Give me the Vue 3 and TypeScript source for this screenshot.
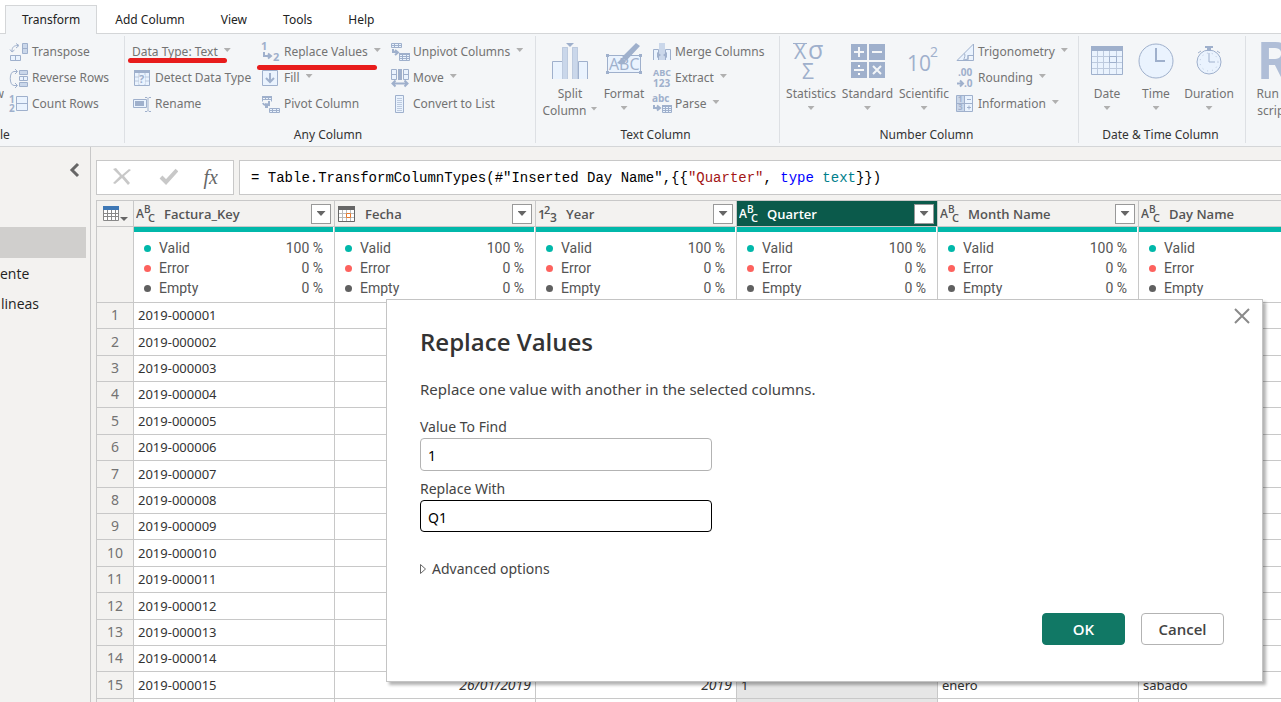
<script setup lang="ts">
import { ref } from 'vue'

interface SmallCommand {
  label: string
  icon?: string
  menu?: boolean
  mark?: boolean
}

interface LargeCommand {
  lines: string[]
  icon: string
  inlineMenu?: boolean
}

interface Block {
  large?: LargeCommand[]
  small?: SmallCommand[]
}

interface Group {
  key: string
  title: string
  blocks: Block[]
}

interface Column {
  name: string
  type: 'text' | 'date' | 'number'
  selected?: boolean
}

const icons: Record<string, string> = {
  transpose:
    '<path class="m" d="M13.5 1.5h5v10h-5zM13.5 6.5h5"/><path class="l" d="M1.500 13.500h10v5h-10zM6.500 13.500v5"/><path class="n" d="M3 9C3 5 5 3.500 9 3.500M1 7.500l2 2.500 2.500-2M7 1.500l3 2-3 2.500"/>',
  reverse:
    '<path class="l" d="M10.500 2.500h8v4h-8zM10.500 8.500h8v4h-8zM10.500 14.500h8v4h-8zM14.500 8.500v4"/><path class="k" d="M11 3h7v3h-7zM11 15h7v3h-7z"/><path class="n" d="M8 3.500H5C0 3.500 0 17.500 5 17.500h3M6 1l2.500 2.500L6 6M6 15l2.500 2.500L6 20"/>',
  count:
    '<text x="0" y="9" font-size="10">1</text><text x="0" y="18" font-size="10">2</text><path class="l" d="M7.500 2.500h11v14h-11zM7.500 9.500h11"/>',
  detect:
    '<path class="l" d="M2.500 2.500h15v15h-15z"/><path class="d" d="M2 2h16v3H2z"/><path class="g" d="M3 9h14M3 13h14M7 5v12M13 5v12"/><path class="p" d="M7 7h6v9H7z"/><text x="7" y="15" font-size="11">?</text>',
  rename:
    '<path class="l" d="M1.500 5.500h13v8h-13z"/><path class="d" d="M3 7h9v5H3z"/><path class="n" d="M13 3.500h2l1 1 1-1h2M16 4.500v12M13 17.500h2l1-1 1 1h2"/>',
  replace:
    '<text x="0" y="8" font-size="11">1</text><text x="12" y="19" font-size="11">2</text><path class="b" d="M3 10v4h6M7 11.500l3 2.500-3 2.500"/>',
  fill:
    '<path class="l" d="M1.500 2.500h15v15h-15z"/><path class="b" d="M9 5v9M5 10l4 4 4-4"/>',
  pivot:
    '<path class="l" d="M1.500 2.500h9v5M1.500 2.500v5M1 5.500h9M4.500 2v4M7.500 2v4M8.500 14.500h10v4h-10zM8.500 16.500h10M11.500 14.500v4M15.500 14.500v4"/><path class="d" d="M1 2h10v2H1z"/><path class="b" d="M2 9c1 3 4 3 6 1M8 7v4l-4-1M4 13h3"/>',
  unpivot:
    '<path class="l" d="M1.500 1.500h10v4h-10zM1.500 3.500h10M4.500 1.500v4M8.500 1.500v4M9.500 12.500h10v6h-10zM9.500 14.500h10M9.500 16.500h10M12.500 12.500v6M16.500 12.500v6"/><path class="d" d="M9 11h11v2H9z"/><path class="b" d="M3 7v3h4M5 8l3 2.500L5 13"/>',
  move:
    '<path class="l" d="M1.500 1.500h5v10h-5zM13.500 1.500h5v10h-5zM1.500 6.500h5M13.500 6.500h5"/><path class="d" d="M8 1h4v11H8z"/><path class="b" d="M3 15.500h14M5.500 12.500l-3 3 3 3M14.500 12.500l3 3-3 3"/>',
  list:
    '<path class="l" d="M5.500 1.500h8v17h-8z"/><path class="g" d="M7 4.500h5M7 6.500h5M7 8.500h5M7 10.500h5M7 12.500h5M7 14.500h5M7 16.500h5"/>',
  merge:
    '<path class="l" d="M1.500 18V7.500h5V18M13.500 18V7.500h5V18"/><path class="k" d="M7 1h6v17H7z"/><path class="d" d="M5 10l4 3-4 3zM15 10l-4 3 4 3z"/>',
  extract:
    '<text x="1" y="8" font-size="9">ABC</text><text x="1" y="19" font-size="10">123</text>',
  parse:
    '<text x="0" y="8" font-size="10">abc</text><path class="l" d="M10.500 12.500h9v6h-9zM10.500 14.500h9M10.500 16.500h9M13.500 12.500v6M16.500 12.500v6"/><path class="d" d="M10 11h10v2H10z"/><path class="b" d="M2 11v3h5M5 11.500l3 2.500-3 2.500"/>',
  trig:
    '<path class="l" d="M2 18.500h16.500V2zM9 18l4-1v-4M13 18.500v-5h5M9.500 11.500c1 2 0 4-1 7"/>',
  round:
    '<text x="3" y="8" font-size="10">.00</text><text x="9" y="19" font-size="10">.0</text><path class="b" d="M2 15.500h6M5 12.500l3 3-3 3"/>',
  info:
    '<path class="l" d="M1.500 1.500h16v16h-16z"/><path class="k" d="M2 2h8v15H2z"/><path class="n" d="M9.500 1.500v16M1.500 9.500h16M12 5.500h4M12 13.500h4M14 11.500v4"/><text x="3" y="8" font-size="8">1</text><text x="3" y="16" font-size="8">3</text>',
  split:
    '<path class="l" d="M.5 37V19.500h10V37M26.500 37V19.500h9V37"/><path class="k" d="M10 5h6v32h-6zM20 5h6v32h-6z"/><path class="g" d="M10.500 37V5.500h5V37M20.500 37V5.500h5V37"/><path class="d" d="M14 1h8l-4 4z"/>',
  format:
    '<path class="l" d="M1.500 13.500h33v17h-33z"/><text x="3" y="28" font-size="16" font-weight="400">ABC</text><path class="d" d="M0 12h3v3H0zM33 12h3v3h-3zM0 29h3v3H0zM33 29h3v3h-3zM30 1l4 3-14 15-4-4zM11 21l5-5 4 3c-2 4-5 4-9 2z"/>',
  stats:
    '<text x="1" y="17" font-size="21" font-weight="400">X</text><text x="15" y="17" font-size="25" font-weight="400">σ</text><path class="n" d="M0 1.500h14"/><text x="9" y="37" font-size="21">Σ</text>',
  standard:
    '<path class="d" d="M1 2h16v16H1zM19 2h16v16H19zM1 20h16v16H1zM19 20h16v16H19z"/><path class="w" d="M4 10h10M9 5v10M22 10h10M4 28h10M23 24l8 8M31 24l-8 8"/><path class="f" d="M8 23h2v2H8zM8 31h2v2H8z"/>',
  scientific:
    '<text x="1" y="29" font-size="21">10</text><text x="24" y="15" font-size="14">2</text>',
  date:
    '<path class="l" d="M2.500 4.500h31v28h-31z"/><path class="d" d="M2 4h32v5H2z"/><path class="g" d="M3 14.500h30M3 20.500h30M3 26.500h30M8.500 9v23M14.500 9v23M20.500 9v23M27.500 9v23"/><path class="n" d="M20.500 14.500h7v6h-7z"/>',
  time:
    '<circle class="l" cx="18" cy="19" r="17"/><path class="b" d="M18 6v13h9"/>',
  duration:
    '<circle class="l" cx="18" cy="20" r="12"/><path class="d" d="M14 4h8v2h-8zM16 6h4v3h-4z"/><path class="n" d="M18 11v9h6M7 11l3-2M29 11l-3-2"/><circle class="t" cx="18" cy="20" r="9"/>',
  rscript: '<text x="3" y="37" font-size="52">R</text>',
}

const tabs = ['Transform', 'Add Column', 'View', 'Tools', 'Help']

const groups: Group[] = [
  {
    key: 'table',
    title: 'le',
    blocks: [
      {
        small: [
          { label: 'Transpose', icon: 'transpose' },
          { label: 'Reverse Rows', icon: 'reverse' },
          { label: 'Count Rows', icon: 'count' },
        ],
      },
    ],
  },
  {
    key: 'any',
    title: 'Any Column',
    blocks: [
      {
        small: [
          { label: 'Data Type: Text', menu: true, mark: true },
          { label: 'Detect Data Type', icon: 'detect' },
          { label: 'Rename', icon: 'rename' },
        ],
      },
      {
        small: [
          { label: 'Replace Values', icon: 'replace', menu: true, mark: true },
          { label: 'Fill', icon: 'fill', menu: true },
          { label: 'Pivot Column', icon: 'pivot' },
        ],
      },
      {
        small: [
          { label: 'Unpivot Columns', icon: 'unpivot', menu: true },
          { label: 'Move', icon: 'move', menu: true },
          { label: 'Convert to List', icon: 'list' },
        ],
      },
    ],
  },
  {
    key: 'text',
    title: 'Text Column',
    blocks: [
      {
        large: [
          { lines: ['Split', 'Column'], icon: 'split', inlineMenu: true },
          { lines: ['Format'], icon: 'format' },
        ],
      },
      {
        small: [
          { label: 'Merge Columns', icon: 'merge' },
          { label: 'Extract', icon: 'extract', menu: true },
          { label: 'Parse', icon: 'parse', menu: true },
        ],
      },
    ],
  },
  {
    key: 'number',
    title: 'Number Column',
    blocks: [
      {
        large: [
          { lines: ['Statistics'], icon: 'stats' },
          { lines: ['Standard'], icon: 'standard' },
          { lines: ['Scientific'], icon: 'scientific' },
        ],
      },
      {
        small: [
          { label: 'Trigonometry', icon: 'trig', menu: true },
          { label: 'Rounding', icon: 'round', menu: true },
          { label: 'Information', icon: 'info', menu: true },
        ],
      },
    ],
  },
  {
    key: 'datetime',
    title: 'Date & Time Column',
    blocks: [
      {
        large: [
          { lines: ['Date'], icon: 'date' },
          { lines: ['Time'], icon: 'time' },
          { lines: ['Duration'], icon: 'duration' },
        ],
      },
    ],
  },
]

const columns: Column[] = [
  { name: 'Factura_Key', type: 'text' },
  { name: 'Fecha', type: 'date' },
  { name: 'Year', type: 'number' },
  { name: 'Quarter', type: 'text', selected: true },
  { name: 'Month Name', type: 'text' },
  { name: 'Day Name', type: 'text' },
]

const quality = [
  { label: 'Valid', value: '100 %', tone: 'valid' },
  { label: 'Error', value: '0 %', tone: 'error' },
  { label: 'Empty', value: '0 %', tone: 'empty' },
]

const rows: string[][] = Array.from({ length: 15 }, (_, i) => {
  const key = `2019-${String(i + 1).padStart(6, '0')}`
  return i === 14 ? [key, '26/01/2019', '2019', '1', 'enero', 'sabado'] : [key, '', '', '', '', '']
})

const valueToFind = ref('1')
const replaceWith = ref('Q1')
</script>

<template>
  <div class="editor">
    <nav class="tabs">
      <button v-for="(tab, i) in tabs" :key="tab" class="tab" :class="{ active: i === 0 }">{{ tab }}</button>
    </nav>

    <header class="ribbon">
      <section v-for="group in groups" :key="group.key" class="group" :class="group.key">
        <div class="blocks">
          <div v-if="group.key === 'table'" class="edge"><span>w</span></div>
          <div v-for="(block, b) in group.blocks" :key="b" class="block">
            <button v-for="cmd in block.large" :key="cmd.icon" class="large" :class="cmd.icon">
              <svg class="ico" width="36" height="38" viewBox="0 0 36 38" v-html="icons[cmd.icon]"></svg>
              <span v-for="line in cmd.lines" :key="line" class="line">
                {{ line }}<i v-if="cmd.inlineMenu && line === 'Column'" class="caret"></i>
              </span>
              <i v-if="!cmd.inlineMenu" class="caret below"></i>
            </button>
            <div v-if="block.small" class="stack">
              <button v-for="cmd in block.small" :key="cmd.label" class="small" :class="{ marked: cmd.mark }">
                <svg v-if="cmd.icon" class="ico" width="20" height="20" viewBox="0 0 20 20" v-html="icons[cmd.icon]"></svg>
                <span>{{ cmd.label }}</span>
                <i v-if="cmd.menu" class="caret"></i>
              </button>
            </div>
          </div>
        </div>
        <div class="group-title">{{ group.title }}</div>
      </section>
      <section class="group scripts">
        <div class="blocks">
          <button class="large rscript">
            <svg class="ico" width="36" height="38" viewBox="0 0 36 38" v-html="icons.rscript"></svg>
            <span class="line">Run R</span>
            <span class="line">script</span>
          </button>
        </div>
      </section>
    </header>

    <div class="workspace">
      <aside class="queries">
        <button class="collapse" aria-label="Collapse">
          <svg width="12" height="16" viewBox="0 0 12 16"><path d="M9 2L3 8l6 6" fill="none" stroke="#666" stroke-width="3" /></svg>
        </button>
        <ul>
          <li class="current"></li>
          <li>ente</li>
          <li>lineas</li>
        </ul>
      </aside>

      <main class="content">
        <div class="formula-bar">
          <div class="formula-actions">
            <button aria-label="Discard">
              <svg width="20" height="20" viewBox="0 0 20 20"><path d="M1 2l3-1 6 7 7-6 2 1-7 6 6 7-2 2-6-7-7 6-2-1 7-7z" fill="#c8c8c8" /></svg>
            </button>
            <button aria-label="Apply">
              <svg width="20" height="20" viewBox="0 0 20 20"><path d="M3 10l5 5L19 3" fill="none" stroke="#c8c8c8" stroke-width="4" /></svg>
            </button>
            <button class="fx">fx</button>
          </div>
          <code class="formula">= Table.TransformColumnTypes(#"Inserted Day Name",{{ '{' + '{' }}<span class="str">"Quarter"</span>, <span class="kw">type</span> <span class="ty">text</span>{{ '}' + '}' }})</code>
        </div>

        <table class="grid">
          <colgroup>
            <col class="col-num" />
            <col v-for="c in columns" :key="c.name" class="col-data" />
          </colgroup>
          <thead>
            <tr class="names">
              <th class="corner">
                <button aria-label="Table menu">
                  <svg width="26" height="18" viewBox="0 0 26 18">
                    <path d="M.5 1.500h15v14H.5zM.5 8.500h15M.5 11.500h15M4.500 5v10M8.500 5v10M12.500 5v10" fill="#fff" stroke="#888" />
                    <path d="M0 1h16v4H0z" fill="#3f78b5" />
                    <path d="M17 12h8l-4 4z" fill="#666" />
                  </svg>
                </button>
              </th>
              <th v-for="c in columns" :key="c.name" :class="{ selected: c.selected }">
                <div class="head">
                  <svg class="type" width="20" height="20" viewBox="0 0 20 20">
                    <template v-if="c.type === 'text'">
                      <text x="0" y="14" font-size="12">A</text>
                      <text x="8" y="9" font-size="10">B</text>
                      <text x="12" y="18" font-size="11">C</text>
                    </template>
                    <template v-else-if="c.type === 'number'">
                      <text x="0" y="15" font-size="13">1</text>
                      <text x="6" y="10" font-size="11">2</text>
                      <text x="12" y="18" font-size="12">3</text>
                    </template>
                    <template v-else>
                      <path d="M1.500 2.500h16v15h-16zM1.500 9.500h16M1.500 13.500h16M5.500 6v11M9.500 6v11M13.500 6v11" fill="#fff" stroke="#bbb" />
                      <path d="M1.500 2.500h16v15h-16z" fill="none" stroke="#666" />
                      <path d="M1 2h17v4H1z" fill="#666" />
                      <path d="M9.500 9.500h4v4h-4z" fill="#fff" stroke="#e67a2e" />
                    </template>
                  </svg>
                  <span class="name">{{ c.name }}</span>
                  <button class="filter" :aria-label="'Filter ' + c.name"><i class="caret dark"></i></button>
                </div>
              </th>
            </tr>
            <tr class="quality">
              <td class="num"></td>
              <td v-for="c in columns" :key="c.name">
                <div class="bar"></div>
                <div class="stats">
                  <div v-for="q in quality" :key="q.label" class="stat">
                    <i class="dot" :class="q.tone"></i><span>{{ q.label }}</span><span class="value">{{ q.value }}</span>
                  </div>
                </div>
              </td>
            </tr>
          </thead>
          <tbody>
            <tr v-for="(row, r) in rows" :key="r">
              <td class="num">{{ r + 1 }}</td>
              <td v-for="(cell, c) in row" :key="c" :class="[columns[c].type, { selected: columns[c].selected }]">{{ cell }}</td>
            </tr>
            <tr>
              <td class="num"></td>
              <td v-for="c in columns" :key="c.name" :class="{ selected: c.selected }"></td>
            </tr>
          </tbody>
        </table>
      </main>
    </div>

    <div class="dialog" role="dialog" aria-labelledby="dialog-title">
      <button class="close" aria-label="Close">
        <svg width="16" height="16" viewBox="0 0 16 16"><path d="M1 1l14 14M15 1L1 15" stroke="#8a8a8a" stroke-width="2" /></svg>
      </button>
      <h1 id="dialog-title">Replace Values</h1>
      <p>Replace one value with another in the selected columns.</p>
      <label for="find">Value To Find</label>
      <input id="find" v-model="valueToFind" type="text" />
      <label for="with">Replace With</label>
      <input id="with" v-model="replaceWith" class="focused" type="text" />
      <button class="advanced">
        <svg width="7" height="12" viewBox="0 0 7 12"><path d="M.5 1.500l5 4.500-5 4.500z" fill="none" stroke="#666" /></svg>
        Advanced options
      </button>
      <div class="actions">
        <button class="primary">OK</button>
        <button class="secondary">Cancel</button>
      </div>
    </div>
  </div>
</template>

<style>
html,
body {
  margin: 0;
  overflow: hidden;
}
</style>

<style scoped>
.editor {
  position: relative;
  display: flex;
  flex-direction: column;
  height: 100vh;
  overflow: hidden;
  background: #f3f2f0;
  color: #333;
  font: 12px/16px "Noto Sans", "Open Sans", sans-serif;
}
button {
  margin: 0;
  padding: 0;
  border: 0;
  background: none;
  color: inherit;
  font: inherit;
  white-space: nowrap;
}
.tabs {
  display: flex;
  flex: none;
  height: 33px;
  padding: 0 5px;
  background: #fff;
  border-bottom: 1px solid #d4d6d8;
}
.tab {
  height: 28px;
  margin-top: 5px;
  padding: 0 17px;
  border: 1px solid transparent;
  border-bottom: 0;
  color: #222;
}
.tab.active {
  height: 29px;
  padding: 0 16px;
  border-color: #d4d6d8;
  background: #f4f6f8;
}
.ribbon {
  display: flex;
  flex: none;
  height: 112px;
  background: #f4f6f8;
  border-bottom: 1px solid #d4d6d8;
  color: #737373;
}
.group {
  position: relative;
  display: flex;
  flex-direction: column;
  flex: none;
  box-sizing: border-box;
  height: 107px;
  margin-top: 2px;
  padding-top: 1px;
  border-right: 1px solid #dde0e4;
}
.group.table { width: 125px; }
.group.any { width: 411px; padding-left: 7px; }
.group.text { width: 244px; padding-left: 4px; }
.group.number { width: 299px; padding-left: 3px; }
.group.datetime { width: 167px; padding-left: 5px; }
.group.scripts { width: 60px; padding-left: 5px; border: 0; }
.blocks {
  display: flex;
  height: 92px;
}
.edge {
  display: flex;
  justify-content: flex-end;
  width: 4px;
  margin-right: 5px;
  padding-top: 49px;
  overflow: hidden;
}
.block {
  display: flex;
}
.any .block {
  width: 129px;
}
.group-title {
  padding-right: 8px;
  color: #333;
  text-align: center;
}
.table .group-title {
  text-align: left;
}
.any .group-title {
  padding-right: 11px;
}
.stack {
  display: flex;
  flex-direction: column;
  align-items: flex-start;
  padding-top: 2px;
}
.small {
  position: relative;
  display: flex;
  align-items: center;
  gap: 3px;
  height: 26px;
}
.marked::after {
  content: "";
  position: absolute;
  left: -4px;
  right: 4px;
  bottom: 2px;
  height: 5px;
  border-radius: 3px;
  background: #e81c1c;
}
.marked:has(.ico)::after {
  bottom: -5px;
}
.caret {
  display: inline-block;
  flex: none;
  width: 7px;
  height: 4px;
  margin: -4px 0 0 3px;
  background: #b0b0b0;
  clip-path: polygon(0 0, 100% 0, 50% 100%);
}
.caret.below {
  margin: 4px 0 0;
}
.caret.dark {
  width: 9px;
  height: 5px;
  margin: 0;
  background: #666;
}
.large {
  display: flex;
  flex-direction: column;
  align-items: center;
  height: 84px;
  padding-top: 5px;
}
.large .line {
  display: flex;
  align-items: center;
  height: 17px;
}
.large .ico {
  flex: none;
  margin-bottom: 5px;
}
.large .line .caret {
  margin-left: 4px;
}
.split { width: 60px; }
.format { width: 48px; margin-right: 4px; }
.stats { width: 56px; }
.standard { width: 57px; }
.scientific { width: 56px; margin-right: 3px; }
.date { width: 46px; }
.time { width: 52px; }
.duration { width: 54px; }
.rscript { width: 44px; }
.ico {
  flex: none;
  overflow: visible;
}
.ico :deep(path),
.ico :deep(circle) {
  fill: none;
  stroke: #9fb0cc;
}
.ico :deep(text) {
  fill: #9fb0cc;
  font-family: "Open Sans", "Noto Sans", sans-serif;
  font-weight: 700;
}
.ico :deep(text[font-weight="400"]) { font-weight: 500; }
.large .ico :deep(text) { font-weight: 500; }
.rscript .ico :deep(text) { fill: #b0bed7; font-family: Roboto, sans-serif; font-weight: 700; }
.ico :deep(.l) { fill: #eaf3fe; }
.ico :deep(.m),
.ico :deep(.k) { fill: #cad7ea; }
.ico :deep(.k),
.ico :deep(.d),
.ico :deep(.p),
.ico :deep(.f) { stroke: none; }
.ico :deep(.d) { fill: #9fb0cc; }
.ico :deep(.p) { fill: #eaf3fe; }
.ico :deep(.f) { fill: #fff; }
.ico :deep(.g) { stroke: #bdcade; }
.ico :deep(.b),
.ico :deep(.w) { stroke-width: 2; }
.ico :deep(.w) { stroke: #f4f6f8; }
.ico :deep(.t) { fill: none; stroke: #b8c6dc; stroke-dasharray: 1 4; }

.workspace {
  display: flex;
  flex: 1;
  min-height: 0;
}
.queries {
  flex: none;
  box-sizing: border-box;
  width: 91px;
  border-right: 1px solid #c8c8c8;
}
.collapse {
  display: block;
  height: 16px;
  margin: 15px 0 49px 69px;
}
.queries ul {
  margin: 0;
  padding: 0;
  list-style: none;
  color: #222;
  font: 14px "Open Sans", sans-serif;
}
.queries li {
  height: 30px;
  margin-right: 4px;
  line-height: 31px;
}
.queries li:last-child {
  padding-left: 1px;
}
.queries .current {
  height: 31px;
  background: #d0cfcd;
}
.content {
  flex: 1;
  min-width: 0;
  padding: 13px 0 0 5px;
  overflow: hidden;
}
.formula-bar {
  display: flex;
  gap: 5px;
  height: 35px;
  margin-bottom: 5px;
}
.formula-actions {
  display: flex;
  flex: none;
  align-items: center;
  justify-content: space-between;
  box-sizing: border-box;
  width: 138px;
  padding: 0 15px 2px;
  background: #fff;
  border: 1px solid #c8c8c8;
}
.formula-actions button {
  display: flex;
}
.fx {
  color: #666;
  font: italic 20px/24px "Liberation Serif", serif;
}
.formula {
  flex: 1;
  padding-left: 11px;
  border: 1px solid #c8c8c8;
  border-right: 0;
  background: #fff;
  color: #000;
  font: 14px/35px "Liberation Mono", monospace;
  white-space: pre;
}
.str { color: #a31515; }
.kw { color: #0000ff; }
.ty { color: #007f8c; }
.grid {
  width: 1244px;
  table-layout: fixed;
  border-collapse: separate;
  border-spacing: 0;
  border-top: 1px solid #c8c8c8;
  border-left: 1px solid #c8c8c8;
}
.col-num { width: 37px; }
.col-data { width: 201px; }
.grid th,
.grid td {
  box-sizing: border-box;
  padding: 0;
  border-right: 1px solid #c8c8c8;
  border-bottom: 1px solid #c8c8c8;
}
.names th {
  height: 26px;
  background: #f3f2f0;
  color: #555;
  font-family: "Open Sans", sans-serif;
  font-size: 13px;
  font-weight: 600;
}
.names th.selected {
  background: #0b5a4b;
  color: #fff;
}
.corner button {
  display: block;
  height: 18px;
  margin-left: 6px;
}
.head {
  display: flex;
  align-items: center;
  padding: 0 3px 0 2px;
  text-align: left;
}
.name {
  flex: 1;
  margin-left: 8px;
}
.type {
  fill: currentColor;
  font-weight: 600;
}
.filter {
  display: grid;
  place-items: center;
  width: 20px;
  height: 20px;
  border: 1px solid #999;
  background: #fff;
}
.quality td {
  height: 76px;
  background: #fff;
  vertical-align: top;
}
.bar {
  height: 5px;
  margin-right: 1px;
  background: #01b8aa;
}
.grid .stats {
  width: auto;
  padding: 6px 11px 0 10px;
  color: #555;
  font: 14px/20px Roboto, sans-serif;
}
.stat {
  display: flex;
  align-items: center;
}
.value {
  margin-left: auto;
}
.dot {
  width: 7px;
  height: 7px;
  margin-right: 8px;
  border-radius: 50%;
}
.dot.valid { background: #01b8aa; }
.dot.error { background: #fd625e; }
.dot.empty { background: #606060; }
.grid tbody td {
  height: 26px;
  padding: 0 4px 1px;
  background: #fff;
  font-size: 13px;
}
.grid tbody tr:nth-child(5n + 2) td,
.grid tbody tr:nth-child(5n) td {
  height: 27px;
}
.grid tbody td.date,
.grid tbody td.number {
  width: auto;
  font-size: 14px;
  font-style: italic;
  text-align: right;
}
.grid tbody td.selected { background: #e6e6e6; }
.grid .num,
.grid tbody td.num {
  background: #f3f2f0;
  color: #737373;
  font-size: 14px;
  text-align: center;
}
.dialog {
  position: absolute;
  top: 299px;
  left: 386px;
  right: 18px;
  box-sizing: border-box;
  padding: 24px 38px 36px 33px;
  border: 1px solid #c4c4c4;
  background: #fff;
  box-shadow: 3px 3px 3px rgba(0, 0, 0, 0.3);
  color: #444;
  font-size: 14px;
}
.close {
  position: absolute;
  top: 8px;
  right: 12px;
  height: 16px;
}
h1 {
  margin: 0 0 17px;
  color: #333;
  font-family: "Open Sans", sans-serif;
  font-size: 24px;
  font-weight: 600;
  line-height: 36px;
}
p {
  margin: 0 0 18px;
  font-size: 15px;
  line-height: 24px;
}
.dialog label {
  display: block;
  margin-bottom: 3px;
  line-height: 16px;
}
.dialog input {
  display: block;
  box-sizing: border-box;
  width: 292px;
  height: 33px;
  margin: 0 0 10px;
  padding: 2px 7px 0;
  border: 1px solid #b3b3b3;
  border-radius: 4px;
  outline: 0;
  background: #fff;
  color: #000;
  font: inherit;
}
.dialog input.focused {
  height: 32px;
  margin-bottom: 27px;
  border-color: #000;
}
.advanced {
  display: flex;
  align-items: center;
  gap: 5px;
  height: 20px;
  margin-bottom: 34px;
}
.actions {
  display: flex;
  justify-content: flex-end;
  gap: 16px;
}
.actions button {
  box-sizing: border-box;
  width: 83px;
  height: 32px;
  border: 1px solid #b3b3b3;
  border-radius: 4px;
  background: #fff;
  font-family: "Open Sans", sans-serif;
  font-size: 15px;
  font-weight: 600;
}
.actions .primary {
  border-color: #117865;
  background: #117865;
  color: #fff;
}
</style>
